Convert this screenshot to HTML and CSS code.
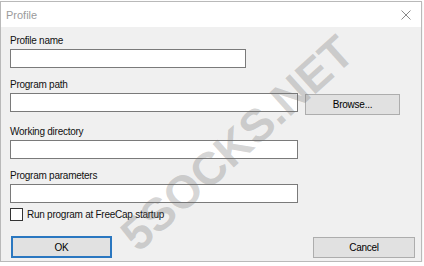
FILE: index.html
```html
<!DOCTYPE html>
<html>
<head>
<meta charset="utf-8">
<link rel="stylesheet" href="styles.css">
</head>
<body>
<div class="window">
  <div class="titlebar">
    <span class="title">Profile</span>
    <svg class="close" width="10" height="10" viewBox="0 0 10 10"><path d="M0.5 0.5 L9.5 9.5 M9.5 0.5 L0.5 9.5" stroke="#8a8a8a" stroke-width="1" fill="none"/></svg>
  </div>
  <div class="content">
    <div class="field">
      <label class="label">Profile name</label>
      <div class="input short"></div>
    </div>
    <div class="field">
      <label class="label">Program path</label>
      <div class="row">
        <div class="input long"></div>
        <button class="btn browse">Browse...</button>
      </div>
    </div>
    <div class="field">
      <label class="label">Working directory</label>
      <div class="input long"></div>
    </div>
    <div class="field">
      <label class="label">Program parameters</label>
      <div class="input long"></div>
    </div>
    <div class="check-row">
      <span class="checkbox"></span>
      <span class="label">Run program at FreeCap startup</span>
    </div>
    <div class="buttons">
      <button class="btn ok">OK</button>
      <button class="btn cancel">Cancel</button>
    </div>
  </div>
  <div class="watermark">5SOCKS.NET</div>
</div>
</body>
</html>
```
FILE: styles.css
```css
html, body {
  margin: 0;
  padding: 0;
  background: #ffffff;
}
body {
  font-family: "Liberation Sans", Arial, sans-serif;
  font-size: 10px;
  letter-spacing: -0.25px;
  color: #000;
}
.window {
  position: relative;
  margin-top: 1px;
  width: 420px;
  height: 259px;
  border: 1px solid #b9b9b9;
  box-shadow: 0 1px 2px rgba(0,0,0,0.12);
  background: #f0f0f0;
  overflow: hidden;
}
.titlebar {
  height: 25px;
  background: #ffffff;
  display: flex;
  align-items: center;
  justify-content: space-between;
  padding: 0 10px 0 5px;
}
.title {
  font-size: 11px;
  letter-spacing: 0;
  color: #9b9b9b;
}
.close {
  display: block;
  margin-top: 1px;
}
.content {
  padding: 7px 6px 0 9px;
  display: flex;
  flex-direction: column;
}
.field {
  display: flex;
  flex-direction: column;
  margin-bottom: 10px;
}
.label {
  line-height: 14px;
  height: 14px;
  margin-bottom: 1px;
  white-space: nowrap;
  color: #111;
}
.input {
  height: 17px;
  background: #fff;
  border: 1px solid #7a7a7a;
  box-sizing: content-box;
}
.input.short { width: 234px; }
.input.long { width: 286px; }
.row {
  display: flex;
  align-items: flex-start;
}
.btn {
  font-family: "Liberation Sans", Arial, sans-serif;
  font-size: 10px;
  letter-spacing: -0.25px;
  color: #000;
  background: #e1e1e1;
  border: 1px solid #adadad;
  padding: 0;
  box-sizing: border-box;
}
.browse {
  margin-left: 7px;
  margin-top: 1px;
  width: 95px;
  height: 21px;
}
.check-row {
  display: flex;
  align-items: center;
  margin-top: -5px;
  height: 13px;
}
.check-row .label {
  margin: 0 0 0 4px;
}
.checkbox {
  width: 11px;
  height: 11px;
  border: 1px solid #333;
  background: #fff;
}
.buttons {
  display: flex;
  justify-content: space-between;
  align-items: flex-start;
  margin-top: 15px;
}
.ok {
  margin-left: 1px;
  width: 101px;
  height: 22px;
  border: 1px solid #2a77c0;
  box-shadow: inset 0 0 0 1px #2a77c0;
}
.cancel {
  margin-top: 1px;
  width: 102px;
  height: 21px;
}
.watermark {
  position: absolute;
  left: 236px;
  top: 141px;
  transform: translate(-50%, -50%) rotate(-42deg);
  font-size: 46px;
  font-weight: bold;
  letter-spacing: 0;
  color: rgba(110,110,110,0.29);
  white-space: nowrap;
  pointer-events: none;
}
```
